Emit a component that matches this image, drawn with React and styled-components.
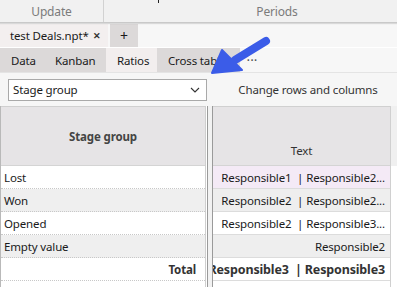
import styled, { createGlobalStyle } from 'styled-components'

const GlobalStyle = createGlobalStyle`
    html, body {
        margin: 0;
        padding: 0;
        width: 397px;
        height: 287px;
        overflow: hidden;
        background: #ffffff;
        font-family: "Noto Sans", "Open Sans", sans-serif;
        font-size: 11.5px;
        letter-spacing: -0.15px;
        color: #1a1a1a;
    }
`

const leftRows = [
    {label: 'Lost', shade: false},
    {label: 'Won', shade: true},
    {label: 'Opened', shade: false},
    {label: 'Empty value', shade: true},
]

const rightRows = [
    {text: 'Responsible1  | Responsible2...', tone: 'pink'},
    {text: 'Responsible2  | Responsible2...', tone: 'gray'},
    {text: 'Responsible2  | Responsible3...', tone: 'white'},
    {text: 'Responsible2', tone: 'gray'},
]

const tones = {pink: '#f4eaf6', gray: '#eeeeee', white: '#ffffff'}

export default function App() {
    return (
        <Page>
            <GlobalStyle />
            <Ribbon>
                <RibbonGroup width="104px">
                    <span>Update</span>
                </RibbonGroup>
                <RibbonGroup width="346px" last>
                    <Tick />
                    <span>Periods</span>
                </RibbonGroup>
            </Ribbon>

            <DocTabs>
                <DocTab width="108px" active>
                    test Deals.npt*
                    <Close>✕</Close>
                </DocTab>
                <DocTab width="28px" plus>+</DocTab>
            </DocTabs>

            <ViewTabs>
                <ViewTab width="44px">Data</ViewTab>
                <ViewTab width="62px">Kanban</ViewTab>
                <ViewTab width="51px" active>Ratios</ViewTab>
                <ViewTab width="83px">Cross table</ViewTab>
                <More>•••</More>
            </ViewTabs>

            <Toolbar>
                <Select>
                    <span>Stage group</span>
                    <svg width="10" height="6" viewBox="0 0 10 6">
                        <path d="M1 1 L5 5 L9 1" fill="none" stroke="#333" strokeWidth="1.1" />
                    </svg>
                </Select>
                <ToolButton>Change rows and columns</ToolButton>
            </Toolbar>

            <Grid>
                <LeftPane>
                    <HeaderCell bold>Stage group</HeaderCell>
                    {leftRows.map(r => (
                        <LeftRow key={r.label} shade={r.shade}>{r.label}</LeftRow>
                    ))}
                    <LeftRow total>Total</LeftRow>
                    <LeftRow />
                </LeftPane>
                <Splitter />
                <RightPane>
                    <HeaderCell low>Text</HeaderCell>
                    {rightRows.map((r, i) => (
                        <RightRow key={i} tone={tones[r.tone]}>{r.text}</RightRow>
                    ))}
                    <RightRow tone="#ffffff" total>
                        <span>Responsible3  | Responsible3</span>
                    </RightRow>
                </RightPane>
                <ScrollGutter />
            </Grid>

            <Arrow width="70" height="44" viewBox="0 0 70 44">
                <line x1="59" y1="6" x2="28" y2="25" stroke="#3b5ce8" strokeWidth="8" strokeLinecap="round" />
                <polygon points="5,38 15,15 35,35" fill="#3b5ce8" stroke="#3b5ce8" strokeWidth="2" strokeLinejoin="round" />
            </Arrow>
        </Page>
    )
}

const Page = styled.div`
    position: relative;
    width: 397px;
    height: 287px;
    display: flex;
    flex-direction: column;
    background: #ffffff;
    overflow: hidden;
`

const Ribbon = styled.div`
    display: flex;
    height: 22px;
    flex-shrink: 0;
    background: #f1f1f1;
    border-bottom: 1px solid #c9c9c9;
    box-shadow: 0 1px 1px rgba(0, 0, 0, 0.12);
    position: relative;
    z-index: 1;
`

const RibbonGroup = styled.div`
    position: relative;
    flex-shrink: 0;
    width: ${props => props.width};
    display: flex;
    align-items: flex-end;
    justify-content: center;
    padding-bottom: 2px;
    box-sizing: border-box;
    color: #7b7b7b;
    font-size: 12px;
    border-right: ${props => props.last ? 'none' : '1px solid #d2d2d2'};
`

const Tick = styled.div`
    position: absolute;
    left: 54px;
    top: 0;
    width: 1px;
    height: 3px;
    background: #222;
`

const DocTabs = styled.div`
    display: flex;
    height: 23px;
    flex-shrink: 0;
    background: #f7f7f7;
    padding-top: 1px;
`

const DocTab = styled.div`
    display: flex;
    align-items: center;
    justify-content: ${props => props.plus ? 'center' : 'space-between'};
    width: ${props => props.width};
    padding: 0 ${props => props.plus ? '0' : '7px 0 10px'};
    margin-right: 2px;
    box-sizing: border-box;
    background: ${props => props.active ? '#f3efef' : '#dcd9d9'};
    font-size: ${props => props.plus ? '14px' : '11.5px'};
    color: #1a1a1a;
`

const Close = styled.span`
    font-size: 9px;
    font-weight: bold;
    color: #333;
`

const ViewTabs = styled.div`
    display: flex;
    height: 24px;
    flex-shrink: 0;
    margin-top: 1px;
    background: #f7f7f7;
    border-bottom: 1px solid #e4e4e4;
`

const ViewTab = styled.div`
    width: ${props => props.width};
    display: flex;
    align-items: center;
    padding-left: 11px;
    box-sizing: border-box;
    background: ${props => props.active ? '#f2eeee' : '#dcd9d9'};
    color: #1a1a1a;
    white-space: nowrap;
    overflow: hidden;
`

const More = styled.div`
    display: flex;
    align-items: center;
    padding-left: 7px;
    font-size: 7px;
    letter-spacing: 1px;
    color: #555;
`

const Toolbar = styled.div`
    display: flex;
    align-items: center;
    height: 33px;
    flex-shrink: 0;
    padding-left: 8px;
    box-sizing: border-box;
    background: #f6f6f6;
`

const Select = styled.div`
    width: 199px;
    height: 22px;
    box-sizing: border-box;
    display: flex;
    align-items: center;
    justify-content: space-between;
    padding: 0 6px 0 4px;
    background: #ffffff;
    border: 1px solid #a9a9a9;
    color: #1a1a1a;
`

const ToolButton = styled.div`
    flex: 1;
    text-align: center;
    color: #333;
    padding-left: 12px;
`

const Grid = styled.div`
    flex: 1;
    display: flex;
    min-height: 0;
    background: #ffffff;
`

const LeftPane = styled.div`
    width: 206px;
    flex-shrink: 0;
    display: flex;
    flex-direction: column;
    border-left: 1px solid #b9b9b9;
    border-right: 1px solid #cfcfcf;
    box-sizing: border-box;
`

const HeaderCell = styled.div`
    height: 60px;
    flex-shrink: 0;
    box-sizing: border-box;
    display: flex;
    align-items: ${props => props.low ? 'flex-end' : 'center'};
    justify-content: center;
    padding-bottom: ${props => props.low ? '7px' : '0'};
    background: #e6e4e6;
    border-top: 1px solid #d0d0d0;
    border-bottom: 1px solid #d4d4d4;
    font-weight: ${props => props.bold ? 'bold' : 'normal'};
    color: ${props => props.bold ? '#444' : '#333'};
`

const LeftRow = styled.div`
    height: 23px;
    flex-shrink: 0;
    box-sizing: border-box;
    display: flex;
    align-items: center;
    justify-content: ${props => props.total ? 'flex-end' : 'flex-start'};
    padding: 0 9px 0 3px;
    background: ${props => props.shade ? '#efefef' : '#ffffff'};
    border-bottom: 1px dotted #c8c8c8;
    font-weight: ${props => props.total ? 'bold' : 'normal'};
    color: ${props => props.total ? '#333' : '#1a1a1a'};
`

const Splitter = styled.div`
    width: 6px;
    flex-shrink: 0;
    box-sizing: border-box;
    border-left: 1px solid #9a9a9a;
    border-right: 1px solid #9a9a9a;
    background: #f2f2f2;
    margin-left: 1px;
`

const RightPane = styled.div`
    width: 177px;
    flex-shrink: 0;
    display: flex;
    flex-direction: column;
    border-right: 1px solid #d0d0d0;
`

const RightRow = styled.div`
    height: 23px;
    flex-shrink: 0;
    box-sizing: border-box;
    display: flex;
    align-items: center;
    justify-content: flex-end;
    padding-right: 5px;
    background: ${props => props.tone};
    border-bottom: 1px solid #dcdcdc;
    overflow: hidden;
    white-space: pre;
    font-weight: ${props => props.total ? 'bold' : 'normal'};
    font-size: ${props => props.total ? '12.5px' : 'inherit'};
    color: ${props => props.total ? '#333' : '#1a1a1a'};

    span {
        flex-shrink: 0;
    }
`

const ScrollGutter = styled.div`
    flex: 1;
    background: linear-gradient(#f0f0f0 0 60px, #ffffff 60px);
`

const Arrow = styled.svg`
    position: absolute;
    left: 207px;
    top: 35px;
    pointer-events: none;
`
